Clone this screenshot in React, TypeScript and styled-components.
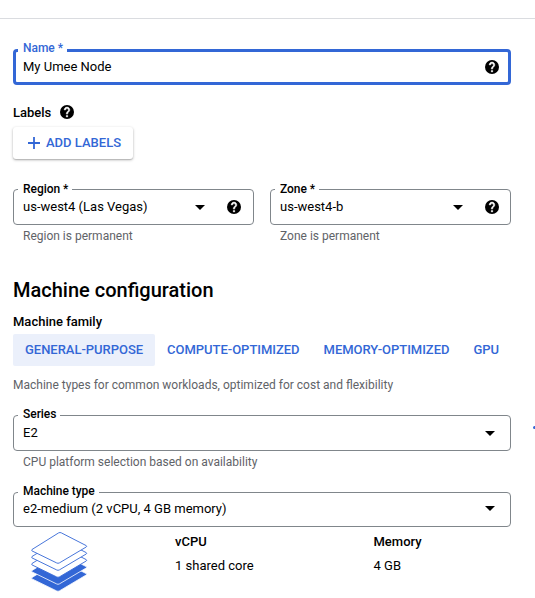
import React from "react";
import styled, { createGlobalStyle, css } from "styled-components";

const BLUE = "#3367d6";

const GlobalStyle = createGlobalStyle`
  * { box-sizing: border-box; }
  html, body { margin: 0; background: #fff; overflow: hidden; }
  body {
    font-family: Roboto, "Liberation Sans", sans-serif;
    font-size: 13px;
    line-height: 20px;
    color: #000;
  }
`;

const Page = styled.main`
  position: relative;
  width: 535px;
  height: 598px;
  overflow: hidden;
  background: #fff;
`;

const TopBar = styled.header`
  height: 19px;
  border-bottom: 1px solid #dadce0;
`;

const Form = styled.form`
  display: flex;
  flex-direction: column;
  width: 498px;
  margin: 30px 0 0 13px;
`;

const FieldGroup = styled.div`
  display: flex;
  flex-direction: column;
  flex: 1;
`;

const Control = styled.div<{ $focused?: boolean; $compact?: boolean; $inset?: number }>`
  position: relative;
  display: flex;
  align-items: center;
  height: ${(p) => (p.$compact ? 35 : 36)}px;
  padding: 0 ${(p) => p.$inset ?? 11}px ${(p) => (p.$compact ? 2 : 0)}px 9px;
  border: 1px solid #80868b;
  border-radius: 4px;
  ${(p) =>
    p.$focused &&
    css`
      border: 3px solid ${BLUE};
      padding: 0 9px 0 7px;
    `}
`;

const FloatingLabel = styled.label<{ $focused?: boolean; $raised?: boolean }>`
  position: absolute;
  top: ${(p) => (p.$focused ? -12 : p.$raised ? -10 : -9)}px;
  left: ${(p) => (p.$focused ? 2 : 4)}px;
  padding: 0 4px 0 5px;
  background: #fff;
  font-size: 12px;
  line-height: 16px;
  font-weight: 500;
  letter-spacing: -0.03px;
  white-space: nowrap;
  color: ${(p) => (p.$focused ? BLUE : "#000")};
`;

const Value = styled.span`
  flex: 1;
  white-space: nowrap;
`;

const Hint = styled.span`
  margin: 3px 0 0 10px;
  font-size: 12px;
  line-height: 16px;
  color: #5f6368;
`;

const Caret = styled.svg<{ $gap?: number }>`
  display: block;
  width: 10px;
  height: 5px;
  margin-right: ${(p) => p.$gap ?? 0}px;
`;

const HelpSvg = styled.svg`
  display: block;
  width: 14px;
  height: 14px;
  flex: none;
`;

const LabelsRow = styled.div`
  display: flex;
  align-items: center;
  gap: 9px;
  height: 20px;
  margin-top: 17px;
`;

const Strong = styled.span`
  font-weight: 500;
`;

const LabelsTitle = styled(Strong)`
  padding-top: 1px;
`;

const AddButton = styled.button`
  display: flex;
  align-items: center;
  gap: 6px;
  align-self: flex-start;
  width: 120px;
  height: 32px;
  margin-top: 5px;
  padding: 0 0 0 15px;
  border: 0;
  border-radius: 3px;
  background: #fff;
  box-shadow: 0 1px 3px rgba(0, 0, 0, 0.28), 0 1px 1px rgba(0, 0, 0, 0.12);
  color: ${BLUE};
  font: 500 13px/20px Roboto, "Liberation Sans", sans-serif;
  white-space: nowrap;
`;

const PlusSvg = styled.svg`
  width: 12px;
  height: 12px;
`;

const LocationRow = styled.div`
  display: flex;
  gap: 16px;
  margin-top: 30px;
`;

const Heading = styled.h2`
  margin: 32px 0 0;
  font-size: 20px;
  line-height: 28px;
  font-weight: 500;
`;

const FamilyTitle = styled(Strong)`
  margin-top: 8px;
`;

const Tabs = styled.nav`
  display: flex;
  height: 32px;
  margin-top: 2px;
`;

const Tab = styled.button<{ $active?: boolean }>`
  padding: 0 12px;
  border: 0;
  border-radius: 2px;
  background: ${(p) => (p.$active ? "#ebf0fb" : "transparent")};
  color: ${BLUE};
  font: 500 13px/32px Roboto, "Liberation Sans", sans-serif;
  letter-spacing: -0.025px;
  white-space: nowrap;
`;

const Description = styled.p`
  margin: 11px 0 22px;
  font-size: 12px;
  line-height: 16px;
  color: #5f6368;
`;

const TypeGroup = styled(FieldGroup)`
  margin-top: 22px;
`;

const Specs = styled.div`
  display: grid;
  grid-template-columns: 162px 198.5px 1fr;
  margin-top: 5px;
`;

const Spec = styled.div`
  display: flex;
  flex-direction: column;
  gap: 4px;
`;

const LayersSvg = styled.svg`
  display: block;
  width: 58px;
  height: 62px;
  margin: -1px 0 0 18px;
`;

const SideLink = styled.i`
  position: absolute;
  left: 533px;
  top: 426px;
  width: 3px;
  height: 3px;
  border-radius: 50%;
  background: ${BLUE};
`;

const HelpIcon = () => (
  <HelpSvg viewBox="2 2 20 20">
    <circle cx="12" cy="12" r="10" />
    <path
      d="M13 19h-2v-2h2v2zm2.07-7.75l-.9.92C13.45 12.9 13 13.5 13 15h-2v-.5c0-1.1.45-2.1 1.17-2.83l1.24-1.26c.37-.36.59-.86.59-1.41 0-1.1-.9-2-2-2s-2 .9-2 2H8c0-2.21 1.79-4 4-4s4 1.79 4 4c0 .88-.36 1.68-.93 2.25z"
      fill="#fff"
      stroke="#fff"
      strokeWidth="0.7"
    />
  </HelpSvg>
);

const Arrow = ({ gap }: { gap?: number }) => (
  <Caret $gap={gap} viewBox="0 0 10 5">
    <path d="M0 0h10L5 5z" />
  </Caret>
);

const LAYERS = [28, 21, 14, 7, 0];

const LayersIcon = () => (
  <LayersSvg viewBox="0 0 58 62">
    {LAYERS.map((y) => (
      <path
        key={y}
        transform={`translate(0 ${y})`}
        d="M1 18.5 27.6 1.9q1.4-.8 2.8 0L55.2 14.6q1 .7 0 1.4L28.4 31.9q-1.4.8-2.8 0L1 19.9q-1-.7 0-1.4z"
        fill={y > 14 ? BLUE : "#fff"}
        stroke={y > 14 ? "#fff" : BLUE}
        strokeWidth={y > 14 ? 0.8 : 0.9}
      />
    ))}
  </LayersSvg>
);

export default function App() {
  return (
    <Page>
      <GlobalStyle />
      <TopBar />
      <Form>
        <Control $focused>
          <FloatingLabel $focused>Name *</FloatingLabel>
          <Value>My Umee Node</Value>
          <HelpIcon />
        </Control>

        <LabelsRow>
          <LabelsTitle>Labels</LabelsTitle>
          <HelpIcon />
        </LabelsRow>
        <AddButton type="button">
          <PlusSvg viewBox="0 0 12 12">
            <path d="M6 0v12M0 6h12" stroke={BLUE} strokeWidth="1.8" />
          </PlusSvg>
          ADD LABELS
        </AddButton>

        <LocationRow>
          <FieldGroup>
            <Control $inset={12}>
              <FloatingLabel>Region *</FloatingLabel>
              <Value>us-west4 (Las Vegas)</Value>
              <Arrow gap={22} />
              <HelpIcon />
            </Control>
            <Hint>Region is permanent</Hint>
          </FieldGroup>
          <FieldGroup>
            <Control>
              <FloatingLabel>Zone *</FloatingLabel>
              <Value>us-west4-b</Value>
              <Arrow gap={22} />
              <HelpIcon />
            </Control>
            <Hint>Zone is permanent</Hint>
          </FieldGroup>
        </LocationRow>

        <Heading>Machine configuration</Heading>
        <FamilyTitle>Machine family</FamilyTitle>
        <Tabs>
          <Tab type="button" $active>GENERAL-PURPOSE</Tab>
          <Tab type="button">COMPUTE-OPTIMIZED</Tab>
          <Tab type="button">MEMORY-OPTIMIZED</Tab>
          <Tab type="button">GPU</Tab>
        </Tabs>
        <Description>
          Machine types for common workloads, optimized for cost and flexibility
        </Description>

        <FieldGroup>
          <Control $inset={15}>
            <FloatingLabel $raised>Series</FloatingLabel>
            <Value>E2</Value>
            <Arrow />
          </Control>
          <Hint>CPU platform selection based on availability</Hint>
        </FieldGroup>

        <TypeGroup>
          <Control $compact $inset={15}>
            <FloatingLabel $raised>Machine type</FloatingLabel>
            <Value>e2-medium (2 vCPU, 4 GB memory)</Value>
            <Arrow />
          </Control>
        </TypeGroup>

        <Specs>
          <LayersIcon />
          <Spec>
            <Strong>vCPU</Strong>
            <Value>1 shared core</Value>
          </Spec>
          <Spec>
            <Strong>Memory</Strong>
            <Value>4 GB</Value>
          </Spec>
        </Specs>
      </Form>
      <SideLink />
    </Page>
  );
}
